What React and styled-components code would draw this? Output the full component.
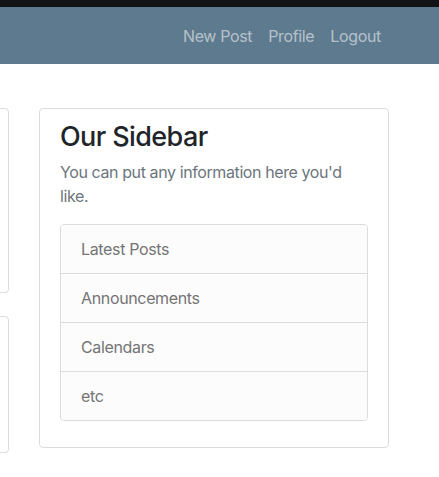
import React from "react";
import styled, { createGlobalStyle } from "styled-components";

const GlobalStyle = createGlobalStyle`
  html, body { margin: 0; padding: 0; background: #ffffff; }
  body {
    font-family: Inter, "Liberation Sans", Arial, sans-serif;
    font-size: 16px;
    line-height: 24px;
    letter-spacing: -0.35px;
    color: #212529;
    overflow: hidden;
  }
  * { box-sizing: border-box; }
`;

const TopStrip = styled.div`
  height: 7px;
  background: #111315;
`;

const Navbar = styled.nav`
  height: 57px;
  background: #5e7a8e;
  display: flex;
  justify-content: flex-end;
  align-items: center;
  padding-right: 50px;
  padding-top: 1px;
`;

const NavLink = styled.a`
  padding: 0 8px;
  font-size: 16px;
  line-height: 24px;
  color: rgba(255, 255, 255, 0.55);
  text-decoration: none;
`;

const Row = styled.div`
  display: flex;
  align-items: flex-start;
  gap: 30px;
  margin-top: 44px;
`;

const MainColumn = styled.div`
  flex: 0 0 300px;
  margin-left: -291px;
  display: flex;
  flex-direction: column;
  gap: 23px;
`;

const Card = styled.div`
  background: #fff;
  border: 1px solid #dcdcdc;
  border-radius: 4px;
  height: ${(p) => p.$h}px;
`;

const SidebarCard = styled.aside`
  flex: 0 0 350px;
  background: #fff;
  border: 1px solid #dcdcdc;
  border-radius: 4px;
  padding: 12px 20px 26px;
`;

const Title = styled.h3`
  margin: 0 0 7px;
  font-size: 27px;
  line-height: 32px;
  font-weight: 500;
  letter-spacing: -0.6px;
  color: #212529;
`;

const Text = styled.p`
  margin: 0 0 16px;
  color: #6c757d;
  font-size: 16px;
  line-height: 24px;
  letter-spacing: -0.4px;
`;

const List = styled.ul`
  list-style: none;
  margin: 0;
  padding: 0;
  border: 1px solid #dcdcdc;
  border-radius: 4px;
  overflow: hidden;
`;

const Item = styled.li`
  padding: 12px 20px;
  background: #fcfcfc;
  color: #747474;
  font-size: 16px;
  line-height: 24px;
  & + & {
    border-top: 1px solid #dcdcdc;
  }
`;

export default function App() {
  const items = ["Latest Posts", "Announcements", "Calendars", "etc"];
  return (
    <>
      <GlobalStyle />
      <TopStrip />
      <Navbar>
        <NavLink href="#">New Post</NavLink>
        <NavLink href="#">Profile</NavLink>
        <NavLink href="#">Logout</NavLink>
      </Navbar>
      <Row>
        <MainColumn>
          <Card $h={185} />
          <Card $h={137} />
        </MainColumn>
        <SidebarCard>
          <Title>Our Sidebar</Title>
          <Text>You can put any information here you'd like.</Text>
          <List>
            {items.map((t) => (
              <Item key={t}>{t}</Item>
            ))}
          </List>
        </SidebarCard>
      </Row>
    </>
  );
}
